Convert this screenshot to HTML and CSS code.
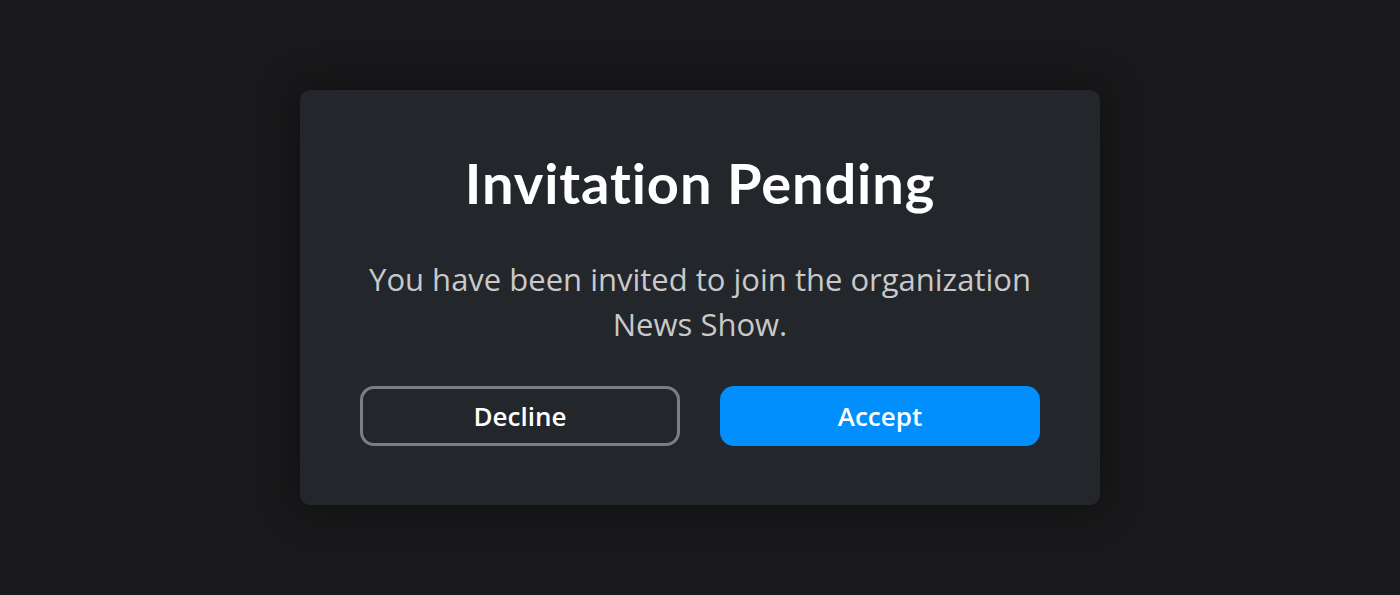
FILE: index.html
```html
<!DOCTYPE html>
<html lang="en">
<head>
    <meta charset="UTF-8">
    <meta name="viewport" content="width=device-width, initial-scale=1.0">
    <title>Invitation Pending</title>
    <link rel="stylesheet" href="styles.css">
</head>
<body>
    <!-- Invitation dialog -->
    <div class="invite-card">
        <h1>Invitation Pending</h1>
        <p>You have been invited to join the organization News Show.</p>

        <div class="invite-actions">
            <button class="btn btn-decline">Decline</button>
            <button class="btn btn-accept">Accept</button>
        </div>
    </div>
</body>
</html>
```

FILE: styles.css
```css
* {
    margin: 0;
    padding: 0;
    box-sizing: border-box;
}

body {
    font-family: 'Open Sans', 'Noto Sans', sans-serif;
    background-color: #19191b;
    color: #fff;
    display: flex;
    align-items: center;
    justify-content: center;
    min-height: 100vh;
}

.invite-card {
    width: 800px;
    padding: 60px 60px 59px;
    background-color: #23262b;
    border-radius: 10px;
    box-shadow: 0 0 40px rgba(0, 0, 0, 0.45);
    text-align: center;
}

.invite-card h1 {
    font-family: 'Lato', sans-serif;
    font-weight: 700;
    font-size: 56px;
    line-height: 66px;
    color: #fff;
    letter-spacing: 0.9px;
}

.invite-card p {
    margin: 41px auto 39px;
    max-width: 680px;
    font-size: 31px;
    line-height: 45px;
    color: #c9c9ca;
}

.invite-actions {
    display: flex;
    justify-content: space-between;
}

.btn {
    width: 320px;
    height: 60px;
    border-radius: 14px;
    font-family: 'Open Sans', sans-serif;
    font-size: 26px;
    font-weight: 600;
    color: #fff;
    cursor: pointer;
}

.btn-decline {
    background-color: transparent;
    border: 3px solid #7b7e82;
}

.btn-accept {
    background-color: #008ffd;
    border: none;
}
```
